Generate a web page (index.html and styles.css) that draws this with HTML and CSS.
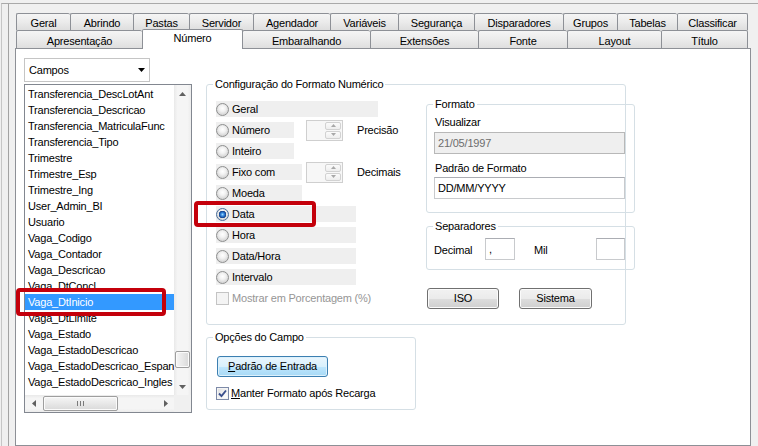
FILE: index.html
```html
<!DOCTYPE html>
<html lang="pt">
<head>
<meta charset="utf-8">
<title>Número</title>
<link rel="stylesheet" href="styles.css">
</head>
<body>
<div class="frame">
  <div class="inner">
    <div class="tabs">
      <div class="tabrow row1">
        <div class="tab">Geral</div>
        <div class="tab">Abrindo</div>
        <div class="tab">Pastas</div>
        <div class="tab">Servidor</div>
        <div class="tab">Agendador</div>
        <div class="tab">Variáveis</div>
        <div class="tab">Segurança</div>
        <div class="tab">Disparadores</div>
        <div class="tab">Grupos</div>
        <div class="tab">Tabelas</div>
        <div class="tab">Classificar</div>
      </div>
      <div class="tabrow row2">
        <div class="tab">Apresentação</div>
        <div class="tab sel">Número</div>
        <div class="tab">Embaralhando</div>
        <div class="tab">Extensões</div>
        <div class="tab">Fonte</div>
        <div class="tab">Layout</div>
        <div class="tab">Título</div>
      </div>
    </div>

    <div class="panel">
      <div class="leftcol">
        <div class="combo">
          <span>Campos</span>
          <svg class="caret" width="7" height="4" viewBox="0 0 7 4"><path d="M0 0h7L3.5 4z" fill="#000"/></svg>
        </div>
        <div class="list">
          <div class="items">
            <div class="item">Transferencia_DescLotAnt</div>
            <div class="item">Transferencia_Descricao</div>
            <div class="item">Transferencia_MatriculaFunc</div>
            <div class="item">Transferencia_Tipo</div>
            <div class="item">Trimestre</div>
            <div class="item">Trimestre_Esp</div>
            <div class="item">Trimestre_Ing</div>
            <div class="item">User_Admin_BI</div>
            <div class="item">Usuario</div>
            <div class="item">Vaga_Codigo</div>
            <div class="item">Vaga_Contador</div>
            <div class="item">Vaga_Descricao</div>
            <div class="item">Vaga_DtConcl</div>
            <div class="item selected">Vaga_DtInicio</div>
            <div class="item">Vaga_DtLimite</div>
            <div class="item">Vaga_Estado</div>
            <div class="item">Vaga_EstadoDescricao</div>
            <div class="item">Vaga_EstadoDescricao_Espanhol</div>
            <div class="item">Vaga_EstadoDescricao_Ingles</div>
          </div>
          <div class="vscroll">
            <div class="sbtn"><svg width="7" height="4" viewBox="0 0 7 4"><path d="M0 4h7L3.5 0z" fill="#606060"/></svg></div>
            <div class="vtrack"><div class="vthumb"></div></div>
            <div class="sbtn"><svg width="7" height="4" viewBox="0 0 7 4"><path d="M0 0h7L3.5 4z" fill="#606060"/></svg></div>
          </div>
          <div class="hscroll">
            <div class="sbtn"><svg width="4" height="7" viewBox="0 0 4 7"><path d="M4 0v7L0 3.5z" fill="#606060"/></svg></div>
            <div class="htrack">
              <div class="hthumb">
                <svg width="7" height="5" viewBox="0 0 7 5"><path d="M0.5 0v5M3.5 0v5M6.5 0v5" stroke="#7a7a7a" stroke-width="1"/></svg>
              </div>
            </div>
            <div class="sbtn"><svg width="4" height="7" viewBox="0 0 4 7"><path d="M0 0v7L4 3.5z" fill="#606060"/></svg></div>
          </div>
          <div class="corner"></div>
        </div>
      </div>

      <div class="rightcol">
        <fieldset class="group outer">
          <legend>Configuração do Formato Numérico</legend>
          <div class="outer-body">
            <div class="opts">
              <div class="opt"><div class="band w-geral"><span class="radio"></span>Geral</div></div>
              <div class="opt">
                <div class="bandcell"><div class="band w-num"><span class="radio"></span>Número</div></div>
                <div class="spin"><div class="spin-edit"></div><div class="spin-btns"><div class="spin-b"><svg width="5" height="3" viewBox="0 0 5 3"><path d="M0 3h5L2.5 0z" fill="#a8a8a8"/></svg></div><div class="spin-b"><svg width="5" height="3" viewBox="0 0 5 3"><path d="M0 0h5L2.5 3z" fill="#a8a8a8"/></svg></div></div></div>
                <span class="spin-label">Precisão</span>
              </div>
              <div class="opt"><div class="band w-num"><span class="radio"></span>Inteiro</div></div>
              <div class="opt">
                <div class="bandcell"><div class="band w-fixo"><span class="radio"></span>Fixo com</div></div>
                <div class="spin"><div class="spin-edit"></div><div class="spin-btns"><div class="spin-b"><svg width="5" height="3" viewBox="0 0 5 3"><path d="M0 3h5L2.5 0z" fill="#a8a8a8"/></svg></div><div class="spin-b"><svg width="5" height="3" viewBox="0 0 5 3"><path d="M0 0h5L2.5 3z" fill="#a8a8a8"/></svg></div></div></div>
                <span class="spin-label">Decimais</span>
              </div>
              <div class="opt"><div class="band w-fixo"><span class="radio"></span>Moeda</div></div>
              <div class="opt"><div class="band w-data"><span class="radio on"></span>Data</div></div>
              <div class="opt"><div class="band w-data"><span class="radio"></span>Hora</div></div>
              <div class="opt"><div class="band w-data"><span class="radio"></span>Data/Hora</div></div>
              <div class="opt"><div class="band w-data"><span class="radio"></span>Intervalo</div></div>
              <div class="check-row disabled"><span class="checkbox"></span>Mostrar em Porcentagem (%)</div>
            </div>

            <div class="fmtcol">
              <fieldset class="group formato">
                <legend>Formato</legend>
                <div class="formato-body">
                  <div class="lbl">Visualizar</div>
                  <div class="input disabled-input">21/05/1997</div>
                  <div class="lbl lbl2">Padrão de Formato</div>
                  <div class="input input2">DD/MM/YYYY</div>
                </div>
              </fieldset>
              <fieldset class="group separadores">
                <legend>Separadores</legend>
                <div class="sep-body">
                  <span class="sep-lbl">Decimal</span>
                  <div class="input small">,</div>
                  <span class="sep-lbl mil">Mil</span>
                  <div class="input small small2"></div>
                </div>
              </fieldset>
              <div class="btnrow">
                <div class="btn iso">ISO</div>
                <div class="btn sistema">Sistema</div>
              </div>
            </div>
          </div>
        </fieldset>

        <fieldset class="group opcoes">
          <legend>Opções do Campo</legend>
          <div class="opcoes-body">
            <div class="btn default"><u>P</u>adrão de Entrada</div>
            <div class="check-row manter">
              <span class="checkbox checked"><svg width="11" height="11" viewBox="0 0 11 11"><path d="M2 5.5l2.5 2.6L9 2.5" fill="none" stroke="#3a4f8c" stroke-width="1.9"/></svg></span><u>M</u>anter Formato após Recarga
            </div>
          </div>
        </fieldset>
      </div>
    </div>
  </div>
</div>
<div class="mark mark-list"></div>
<div class="mark mark-data"></div>
</body>
</html>
```

FILE: styles.css
```css
* { box-sizing: border-box; }
html, body { margin: 0; padding: 0; }
body {
  width: 758px;
  height: 446px;
  overflow: hidden;
  position: relative;
  background: #f0f0f0;
  color: #000;
  font-family: "Liberation Sans", Arial, sans-serif;
  font-size: 11px;
  line-height: 13px;
  letter-spacing: -0.2px;
}

/* window frame */
.frame {
  margin: 3px 0 0 1px;
  height: 443px;
  border-top: 1px solid #a9a9a9;
  border-left: 1px solid #c6c6c6;
  padding-left: 6px;
}
.inner {
  height: 100%;
  border-left: 1px solid #a3a3a3;
  padding: 9px 0 0 6px;
}

/* tabs */
.tabs { margin-left: 1px; width: 732px; }
.tabrow { display: flex; align-items: flex-start; }
.row1 { height: 17px; }
.row2 { height: 18px; }
.tab {
  flex: none;
  text-align: center;
  white-space: nowrap;
  border: 1px solid #8d9096;
  border-bottom: 0;
  border-right: 0;
  border-radius: 2px 2px 0 0;
  background: linear-gradient(#f5f5f5, #ebebeb 50%, #dedede);
}
.tab:last-child { border-right: 1px solid #8d9096; }
.row1 .tab { height: 17px; padding-top: 2px; line-height: 14px; }
.row2 .tab { height: 18px; padding-top: 3px; line-height: 14px; }
.row2 .tab.sel {
  height: 20px;
  margin-top: -1px;
  margin-right: -1px;
  padding-top: 1px;
  background: #fff;
  border-right: 1px solid #8d9096;
  position: relative;
  z-index: 2;
}
.row1 .tab:nth-child(1) { width: 54px; }
.row1 .tab:nth-child(2) { width: 63px; }
.row1 .tab:nth-child(3) { width: 56px; }
.row1 .tab:nth-child(4) { width: 64px; }
.row1 .tab:nth-child(5) { width: 77px; }
.row1 .tab:nth-child(6) { width: 68px; }
.row1 .tab:nth-child(7) { width: 76px; }
.row1 .tab:nth-child(8) { width: 89px; }
.row1 .tab:nth-child(9) { width: 54px; }
.row1 .tab:nth-child(10) { width: 60px; }
.row1 .tab:nth-child(11) { width: 71px; }
.row2 .tab:nth-child(1) { width: 126px; }
.row2 .tab:nth-child(2) { width: 101px; }
.row2 .tab:nth-child(3) { width: 128px; }
.row2 .tab:nth-child(4) { width: 108px; }
.row2 .tab:nth-child(5) { width: 89px; }
.row2 .tab:nth-child(6) { width: 94px; }
.row2 .tab:nth-child(7) { width: 87px; }

/* panel */
.panel {
  width: 736px;
  height: 398px;
  background: #fff;
  border: 1px solid #8d9096;
  display: flex;
  align-items: flex-start;
  padding: 8px 0 0 8px;
}

/* left column */
.leftcol { width: 167px; flex: none; }
.combo {
  margin-top: 1px;
  width: 126px;
  height: 24px;
  border: 1px solid #c5c5c5;
  background: #fff;
  display: flex;
  align-items: center;
  justify-content: space-between;
  padding: 0 4px 0 4px;
}
.caret { display: block; }

.list {
  margin-top: 2px;
  width: 168px;
  height: 329px;
  border: 1px solid #828790;
  display: grid;
  grid-template-columns: 149px 17px;
  grid-template-rows: 310px 17px;
  background: #fff;
}
.items { overflow: hidden; padding-top: 1px; }
.item {
  height: 16px;
  line-height: 16px;
  padding-left: 3px;
  white-space: nowrap;
}
.item.selected { background: #3399ff; color: #fff; }

.sbtn {
  width: 17px;
  height: 17px;
  flex: none;
  display: flex;
  align-items: center;
  justify-content: center;
}
.sbtn svg { display: block; }
.vscroll {
  display: flex;
  flex-direction: column;
  background: linear-gradient(90deg, #e9e9e9, #f5f5f5 20%, #f5f5f5 80%, #ececec);
}
.vtrack { flex: 1; padding: 0 1px; }
.vthumb {
  margin-top: 249px;
  height: 17px;
  border: 1px solid #9e9e9e;
  border-radius: 2px;
  background: linear-gradient(90deg, #f6f6f6, #e8e8e8 50%, #d9d9d9);
  box-shadow: inset 0 0 0 1px #fbfbfb;
}
.hscroll {
  display: flex;
  background: linear-gradient(#e9e9e9, #f5f5f5 20%, #f5f5f5 80%, #ececec);
}
.htrack { flex: 1; padding: 1px 0; }
.hthumb {
  margin-left: 1px;
  width: 75px;
  height: 15px;
  border: 1px solid #9e9e9e;
  border-radius: 2px;
  background: linear-gradient(#f6f6f6, #e8e8e8 50%, #d9d9d9);
  box-shadow: inset 0 0 0 1px #fbfbfb;
  display: flex;
  align-items: center;
  justify-content: center;
}
.hthumb svg { display: block; }
.corner { background: #f0f0f0; }

/* right column */
.rightcol { flex: none; margin-left: 15px; width: 420px; }
.group {
  margin: 0;
  padding: 0;
  min-width: 0;
  border: 1px solid #d5dfe5;
  border-radius: 3px;
}
.group > legend {
  padding: 0 2px;
  margin-left: 6px;
  line-height: 13px;
}
.outer { margin-top: 21px; width: 420px; }
.outer-body { display: flex; align-items: flex-start; padding: 0 0 15px 9px; }

.opts { width: 210px; flex: none; padding-top: 10px; }
.opt { display: flex; align-items: center; height: 16px; margin-bottom: 5px; }
.band {
  height: 16px;
  background: #efefef;
  display: flex;
  align-items: center;
  white-space: nowrap;
}
.w-geral { width: 162px; }
.w-num { width: 78px; }
.w-fixo { width: 86px; }
.w-data { width: 140px; }
.bandcell { width: 90px; flex: none; }
.radio {
  width: 13px;
  height: 13px;
  flex: none;
  border-radius: 50%;
  border: 1px solid #8e8f8f;
  background: radial-gradient(circle at 50% 40%, #ffffff 0, #f2f2f2 3px, #d8d8d8 6px);
  margin-right: 3px;
}
.radio.on {
  background:
    radial-gradient(circle at 50% 50%, #9fd8ff 0, #3c8fe0 1.5px, #1b58b0 2.8px, #17407e 3.5px, rgba(0,0,0,0) 4px),
    radial-gradient(circle at 50% 40%, #ffffff 0, #f2f2f2 3px, #d8d8d8 6px);
  border-color: #4a6f9c;
}
.spin {
  width: 37px;
  height: 21px;
  flex: none;
  border: 1px solid #cfcfcf;
  background: #f7f7f7;
  display: flex;
  padding: 1px;
}
.spin-edit { flex: 1; }
.spin-btns { width: 16px; display: flex; flex-direction: column; gap: 1px; }
.spin-b {
  flex: 1;
  border: 1px solid #d2d2d2;
  border-radius: 2px;
  background: linear-gradient(#fbfbfb, #eeeeee);
  display: flex;
  align-items: center;
  justify-content: center;
}
.spin-b svg { display: block; }
.spin-label { margin-left: 14px; white-space: nowrap; }

.check-row { display: flex; align-items: center; height: 16px; white-space: nowrap; }
.opts .check-row { margin-top: 4px; }
.checkbox {
  width: 13px;
  height: 13px;
  flex: none;
  border: 1px solid #8e8f8f;
  background: linear-gradient(135deg, #dcdcdc, #f6f6f6 60%, #ffffff);
  box-shadow: inset 0 0 0 1px #f4f4f4;
  margin-right: 3px;
  display: flex;
  align-items: center;
  justify-content: center;
}
.check-row.disabled { color: #969696; }
.check-row.disabled .checkbox {
  border-color: #c4c4c4;
  background: #f4f4f4;
  box-shadow: none;
}
.checkbox svg { display: block; }
.checkbox.checked { border-color: #7d8aa8; }

.fmtcol { width: 209px; flex: none; padding-top: 7px; }
.formato { width: 209px; }
.formato-body { padding: 5px 0 13px 7px; }
.lbl { padding-left: 1px; line-height: 13px; }
.lbl2 { margin-top: 8px; }
.input {
  width: 191px;
  height: 22px;
  margin-top: 3px;
  border: 1px solid #c8cacd;
  border-top-color: #abadb3;
  background: #fff;
  padding-left: 3px;
  line-height: 20px;
  white-space: nowrap;
}
.input2 { margin-top: 2px; }
.disabled-input { background: #efefef; color: #6d6d6d; border-color: #b8b8b8; }

.separadores { width: 209px; margin-top: 7px; }
.sep-body { display: flex; align-items: center; padding: 5px 0 9px 7px; }
.sep-lbl { width: 51px; flex: none; padding-top: 3px; }
.sep-lbl.mil { width: 62px; margin-left: 19px; }
.input.small { width: 30px; margin-top: 0; flex: none; }
.input.small2 { width: 29px; }

.btnrow { display: flex; margin-top: 18px; padding-left: 1px; }
.btn {
  height: 21px;
  border: 1px solid #707070;
  border-radius: 3px;
  background: linear-gradient(#f2f2f2 0%, #ebebeb 50%, #dddddd 51%, #cfcfcf 100%);
  box-shadow: inset 0 0 0 1px #fbfbfb;
  text-align: center;
  line-height: 19px;
  white-space: nowrap;
}
.iso { width: 72px; }
.sistema { width: 73px; margin-left: 20px; }

.opcoes { width: 210px; margin-top: 6px; }
.opcoes-body { padding: 12px 0 9px 10px; }
.btn.default {
  width: 111px;
  border-color: #3c7fb1;
  background: linear-gradient(#eaf6fd 0%, #d9f0fc 50%, #bee6fd 51%, #a7d9f5 100%);
  box-shadow: inset 0 0 0 1px #ddf1fc;
}
.manter { margin-top: 10px; margin-left: -1px; height: 13px; }
.manter .checkbox { margin-right: 2px; }

/* red annotation boxes drawn over the screenshot */
.mark {
  position: absolute;
  border: 4px solid #c4000b;
  border-radius: 4px;
  z-index: 5;
}
.mark-list { left: 16px; top: 288px; width: 150px; height: 28px; }
.mark-data { left: 194px; top: 201px; width: 122px; height: 26px; }
```
